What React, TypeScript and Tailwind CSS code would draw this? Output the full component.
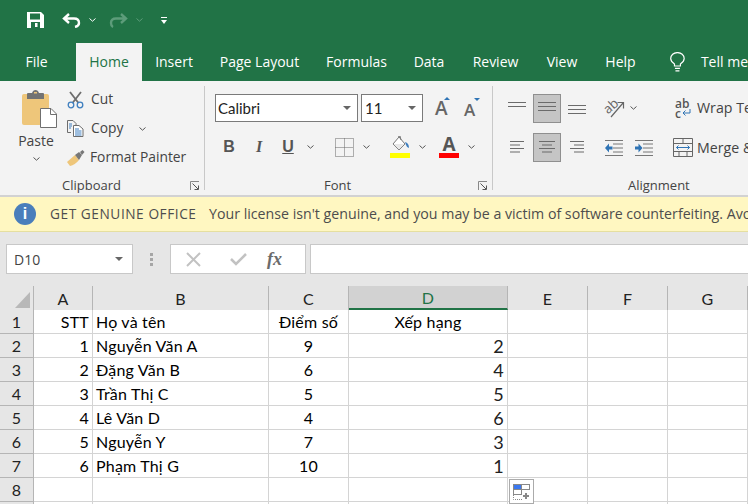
import React from 'react';

const tabs = [
  { label: 'File', cls: 'w-[73px]' },
  { label: 'Home', cls: 'w-[66px] ml-[3px] bg-[#f3f3f3] text-[#217346]' },
  { label: 'Insert', cls: 'w-[64px]' },
  { label: 'Page Layout', cls: 'w-[107px]' },
  { label: 'Formulas', cls: 'w-[87px]' },
  { label: 'Data', cls: 'w-[58px]' },
  { label: 'Review', cls: 'w-[75px]' },
  { label: 'View', cls: 'w-[58px]' },
  { label: 'Help', cls: 'w-[59px]' },
];

const rows = [
  ['1', 'STT', 'Họ và tên', 'Điểm số', 'Xếp hạng'],
  ['2', '1', 'Nguyễn Văn A', '9', '2'],
  ['3', '2', 'Đặng Văn B', '6', '4'],
  ['4', '3', 'Trần Thị C', '5', '5'],
  ['5', '4', 'Lê Văn D', '4', '6'],
  ['6', '5', 'Nguyễn Y', '7', '3'],
  ['7', '6', 'Phạm Thị G', '10', '1'],
  ['8', '', '', '', ''],
  ['9', '', '', '', ''],
];

function Chevron({ color = '#555', className = '' }: { color?: string; className?: string }) {
  return (
    <svg width="7" height="4" viewBox="0 0 7 4" className={'shrink-0 ' + className}>
      <path d="M0.5 0.5 L3.5 3.2 L6.5 0.5" fill="none" stroke={color} strokeWidth="1" />
    </svg>
  );
}

function Caret() {
  return <div className="w-0 h-0 border-x-[4px] border-x-transparent border-t-[4px] border-t-[#666]" />;
}

function Launcher() {
  return (
    <svg width="10" height="10" viewBox="0 0 10 10">
      <path d="M0.5 9 V0.5 H9" fill="none" stroke="#888" />
      <path d="M2.5 2.5 L8 8 M8.5 4.5 V8.5 H4.5" fill="none" stroke="#555" />
    </svg>
  );
}

function Lines({ w = 18, gap = 4, widths }: { w?: number; gap?: number; widths: [number, number][] }) {
  return (
    <svg width={w} height="13" viewBox={'0 0 ' + w + ' 13'} className="block">
      {widths.map(([x, len], i) => (
        <rect key={i} x={x} y={i * gap} width={len} height="1" fill="#6b6b6b" />
      ))}
    </svg>
  );
}

function Sep({ className = 'h-[27px]' }: { className?: string }) {
  return <div className={'w-px shrink-0 bg-[#c8c8c8] ' + className} />;
}

function PasteIcon() {
  return (
    <svg width="35" height="38" viewBox="0 0 35 38">
      <rect x="0" y="4" width="27" height="31" rx="2" fill="#eec67a" />
      <path d="M5 4 Q5 3 6 3 H10 Q11 0 13.5 0 Q16 0 17 3 H21 Q22 3 22 4 V9 H5 Z" fill="#737373" />
      <rect x="12" y="2" width="3" height="1.5" fill="#eec67a" />
      <path d="M18.5 18.5 H29 L34.5 24 V37.5 H18.5 Z" fill="#fff" stroke="#6f6f6f" />
      <path d="M28.5 18.5 V24.5 H34.5" fill="none" stroke="#6f6f6f" />
    </svg>
  );
}

function CutIcon() {
  return (
    <svg width="17" height="18" viewBox="0 0 17 18">
      <path d="M3 1 L11.5 12 M14 1 L5.5 12" stroke="#6d6d6d" strokeWidth="1.8" fill="none" />
      <circle cx="4" cy="14" r="2.8" fill="none" stroke="#3f7fbf" strokeWidth="1.3" />
      <circle cx="13" cy="14" r="2.8" fill="none" stroke="#3f7fbf" strokeWidth="1.3" />
    </svg>
  );
}

function CopyIcon() {
  return (
    <svg width="17" height="17" viewBox="0 0 17 17">
      <path d="M0.5 0.5 H6 L9 3.5 V5 M4 12.5 H0.5 V0.5" fill="none" stroke="#6d6d6d" />
      <path d="M6.5 5.5 H12 L16 9 V16.5 H6.5 Z" fill="#fff" stroke="#6d6d6d" />
      <path d="M8 9 H12 M8 11 H14.5 M8 13 H14.5 M8 15 H14.5" stroke="#3f7fbf" />
      <path d="M2 4 H5 M2 6 H5 M2 8 H4" stroke="#3f7fbf" />
    </svg>
  );
}

function BrushIcon() {
  return (
    <svg width="18" height="16" viewBox="0 0 18 16">
      <path d="M0 12 L8 5 L12 10 Q8 15 3 16 Z" fill="#eec67a" />
      <path d="M8 5 L12 2 L15 5 L12 10 Z" fill="#777" />
      <path d="M13 2 L15.5 0 L17.5 2 L15 5 Z" fill="#777" />
    </svg>
  );
}

function Bordered() {
  return (
    <svg width="19" height="19" viewBox="0 0 19 19" className="block">
      <path d="M0.5 0.5 H18.5 V18.5 H0.5 Z M9.5 0.5 V18.5 M0.5 9.5 H18.5" fill="none" stroke="#666" strokeDasharray="1 1" />
    </svg>
  );
}

function FillIcon() {
  return (
    <div className="flex flex-col items-center">
      <svg width="20" height="17" viewBox="0 0 20 17" className="block">
        <path d="M9 1 L3 8 L9 14 L15 8 Z" fill="#fff" stroke="#777" />
        <path d="M3.5 8 H14.5 L9 13.5 Z" fill="#e8e8e8" />
        <path d="M8 1 L10 0 L11 4" fill="none" stroke="#777" />
        <path d="M15 6 Q19 7 19 12 Q17 12 16 9 Z" fill="#3f7fbf" />
      </svg>
      <div className="w-[20px] h-[5px] bg-[#ffff00]" />
    </div>
  );
}

function OrientationIcon() {
  return (
    <svg width="21" height="20" viewBox="0 0 21 20" className="block">
      <g transform="rotate(-42 8 9)">
        <text x="0" y="12" fontSize="13" fill="#666" fontFamily="'Open Sans', sans-serif">ab</text>
      </g>
      <path d="M7 19 L19 5 M13.5 4.5 H19.5 V10.5" fill="none" stroke="#666" strokeWidth="1.2" />
    </svg>
  );
}

function IndentIcon({ flip }: { flip?: boolean }) {
  return (
    <svg width="18" height="16" viewBox="0 0 18 16" className="block">
      <path d="M0 0.5 H18 M8 4 H18 M8 8 H18 M8 12 H18 M0 15.5 H18" stroke="#777" fill="none" />
      {flip ? (
        <path d="M0 6.5 H3.5 V3.5 L7.5 8 L3.5 12.5 V9.5 H0 Z" fill="#2f74b5" />
      ) : (
        <path d="M7.5 6.5 H4 V3.5 L0 8 L4 12.5 V9.5 H7.5 Z" fill="#2f74b5" />
      )}
    </svg>
  );
}

function MergeIcon() {
  return (
    <svg width="20" height="19" viewBox="0 0 20 19" className="block">
      <path d="M0.5 0.5 H19.5 V18.5 H0.5 Z M0.5 5.5 H19.5 M0.5 13.5 H19.5 M10 0.5 V5.5 M6 13.5 V18.5 M14 13.5 V18.5" fill="none" stroke="#666" />
      <path d="M3.5 9.5 H16.5 M5.5 7.5 L3.5 9.5 L5.5 11.5 M14.5 7.5 L16.5 9.5 L14.5 11.5" fill="none" stroke="#2f74b5" />
    </svg>
  );
}

function Group({ label, width, labelCls, launcher, children }: { label: string; width: string; labelCls: string; launcher?: boolean; children: React.ReactNode }) {
  return (
    <section className={'flex flex-col shrink-0 h-full ' + width}>
      <div className="flex-1 min-h-0">{children}</div>
      <div className={'flex items-center justify-between h-[20px] mb-[-1px] text-[13px] text-[#444] ' + labelCls}>
        <span>{label}</span>
        {launcher && <Launcher />}
      </div>
    </section>
  );
}

export default function App() {
  return (
    <div className="w-[748px] h-[504px] overflow-hidden bg-[#e6e6e6] text-[#444] font-['Open_Sans',sans-serif]">
      {/* quick access */}
      <div className="h-[43px] bg-[#217346] flex items-center pl-[27px] pb-[3px]">
        <svg width="17" height="16" viewBox="0 0 17 16">
          <path d="M0 0 H14 L17 3 V16 H0 Z" fill="#fff" />
          <rect x="3" y="1.5" width="10" height="6" fill="#217346" />
          <rect x="4" y="10" width="9" height="6" fill="#217346" />
          <rect x="8" y="11" width="2.5" height="4" fill="#fff" />
        </svg>
        <svg width="19" height="15" viewBox="0 0 19 15" className="ml-[18px]">
          <path d="M7 1 L2 5.5 L7 10 M2 5.5 H12 Q17 5.5 17 10 Q17 13 13 14" fill="none" stroke="#fff" strokeWidth="2.4" />
        </svg>
        <Chevron color="#fff" className="ml-[8px]" />
        <svg width="19" height="15" viewBox="0 0 19 15" className="ml-[13px]">
          <path d="M12 1 L17 5.5 L12 10 M17 5.5 H7 Q2 5.5 2 10 Q2 13 4 14" fill="none" stroke="#5d9c7a" strokeWidth="2.4" />
        </svg>
        <Chevron color="#5d9c7a" className="ml-[8px]" />
        <svg width="6" height="7" viewBox="0 0 6 7" className="ml-[18px]">
          <rect y="0" width="6" height="1" fill="#fff" />
          <path d="M0 3 H6 L3 7 Z" fill="#fff" />
        </svg>
      </div>

      {/* tabs */}
      <div className="h-[38px] bg-[#217346] flex items-stretch text-[14px] text-white">
        {tabs.map((t) => (
          <div key={t.label} className={'flex items-center justify-center shrink-0 pb-px ' + t.cls}>
            {t.label}
          </div>
        ))}
        <svg width="15" height="20" viewBox="0 0 15 20" className="ml-[20px] self-center">
          <path d="M4.5 14 V12 Q0.7 9.5 0.7 6.5 A6.8 6 0 0 1 14.3 6.5 Q14.3 9.5 10.5 12 V14 Z" fill="none" stroke="#fff" strokeWidth="1.2" />
          <path d="M5 16.5 H10 M5.5 19 H9.5" stroke="#fff" strokeWidth="1.2" />
        </svg>
        <div className="flex items-center ml-[16px] pb-px whitespace-nowrap">Tell me</div>
      </div>

      {/* ribbon */}
      <div className="h-[114px] bg-[#f3f3f3] flex overflow-hidden">
        <Group label="Clipboard" width="w-[204px]" labelCls="pl-[62px] pr-[4px]" launcher>
          <div className="flex">
            <div className="w-[72px] pl-[22px] pt-[9px] flex flex-col items-start">
              <PasteIcon />
              <div className="w-[36px] -ml-[4px] text-center text-[14px] mt-[2px]">Paste</div>
              <Chevron className="ml-[11px] mt-[6px]" />
            </div>
            <div className="-ml-[5px] pt-[4px] text-[13.8px]">
              <div className="h-[29px] flex items-center gap-[7px]"><CutIcon /><span>Cut</span></div>
              <div className="h-[29px] flex items-center gap-[7px]"><CopyIcon /><span>Copy</span><Chevron className="ml-[9px]" /></div>
              <div className="h-[29px] flex items-center gap-[5px]"><BrushIcon /><span className="whitespace-nowrap">Format Painter</span></div>
            </div>
          </div>
        </Group>
        <Sep className="h-[104px] mt-[5px]" />
        <Group label="Font" width="w-[287px]" labelCls="pl-[119px] pr-[4px]" launcher>
          <div className="pl-[10px] pt-[13px]">
            <div className="flex items-center">
              <div className="w-[143px] h-[28px] bg-white border border-[#7a7a7a] flex items-center justify-between pl-[2px] pr-[6px] text-[15px]">
                <span className="font-['Lato',sans-serif] text-[#222]">Calibri</span><Caret />
              </div>
              <div className="w-[62px] h-[28px] ml-[3px] bg-white border border-[#7a7a7a] flex items-center justify-between pl-[3px] pr-[6px] text-[15px] text-[#222]">
                <span className="font-['Lato',sans-serif]">11</span><Caret />
              </div>
              <div className="ml-[12px] w-[15px] relative text-[19px] font-semibold text-[#666] leading-none">
                A<div className="absolute right-0 -top-[2px] w-0 h-0 border-x-[3px] border-x-transparent border-b-[3px] border-b-[#2f74b5]" />
              </div>
              <div className="ml-[14px] w-[16px] relative text-[17px] font-semibold text-[#666] leading-none mt-[2px]">
                A<div className="absolute right-0 -top-[3px] w-0 h-0 border-x-[3px] border-x-transparent border-t-[3px] border-t-[#2f74b5]" />
              </div>
            </div>
            <div className="flex items-center h-[28px] mt-[11px] text-[#555]">
              <div className="w-[12px] ml-[8px] text-center text-[16px] font-bold font-['Liberation_Sans',sans-serif]">B</div>
              <div className="w-[12px] ml-[18px] text-center text-[16px] font-bold italic font-['Liberation_Serif',serif]">I</div>
              <div className="w-[14px] ml-[16px] text-center text-[16px] font-bold underline font-['Liberation_Sans',sans-serif]">U</div>
              <Chevron className="ml-[12px]" />
              <Sep className="ml-[12px]" />
              <div className="ml-[8px]"><Bordered /></div>
              <Chevron className="ml-[9px]" />
              <Sep className="ml-[11px]" />
              <div className="ml-[8px]"><FillIcon /></div>
              <Chevron className="ml-[9px]" />
              <div className="ml-[13px] flex flex-col items-center">
                <span className="text-[19px] leading-[17px] font-bold text-[#555]">A</span>
                <div className="w-[20px] h-[5px] bg-[#ff0000]" />
              </div>
              <Chevron className="ml-[9px]" />
            </div>
          </div>
        </Group>
        <Sep className="h-[104px] mt-[5px]" />
        <div className="flex-1 min-w-0">
          <Group label="Alignment" width="w-full" labelCls="pl-[135px] justify-start">
            <div className="pl-[15px] pt-[13px] whitespace-nowrap">
              <div className="flex items-center w-max h-[28px]">
                <Lines widths={[[0, 18], [0, 18], [0, 0]]} />
                <div className="w-[28px] h-[29px] ml-[7px] bg-[#c5c5c5] border border-[#8f8f8f] flex items-center justify-center"><Lines widths={[[0, 18], [0, 18], [0, 18]]} /></div>
                <div className="ml-[7px] mt-[6px]"><Lines widths={[[0, 18], [0, 18], [0, 18]]} /></div>
                <Sep className="ml-[9px]" />
                <div className="ml-[8px]"><OrientationIcon /></div>
                <Chevron className="ml-[5px]" />
                <Sep className="ml-[26px]" />
                <div className="ml-[11px] w-[18px] flex flex-col text-[12px] leading-[9px] text-[#555] font-semibold">
                  <span>ab</span>
                  <div className="flex items-center mt-[1px]">
                    <span>c</span>
                    <svg width="9" height="8" viewBox="0 0 9 8" className="ml-[1px]"><path d="M8 0 V4 H1 M3.500 1.500 L1 4 L3.500 6.500" fill="none" stroke="#2f74b5" /></svg>
                  </div>
                </div>
                <span className="ml-[4px] text-[14.2px]">Wrap Text</span>
              </div>
              <div className="flex items-center w-max h-[29px] mt-[11px]">
                <div className="ml-[2px]"><Lines w={14} gap={3.5} widths={[[0, 14], [0, 10], [0, 14], [0, 10]]} /></div>
                <div className="w-[28px] h-[29px] ml-[9px] bg-[#c5c5c5] border border-[#8f8f8f] flex items-center justify-center"><Lines w={16} gap={3.5} widths={[[0, 16], [3, 10], [0, 16], [3, 10]]} /></div>
                <div className="ml-[9px]"><Lines w={14} gap={3.5} widths={[[0, 14], [4, 10], [0, 14], [4, 10]]} /></div>
                <Sep className="ml-[11px]" />
                <div className="ml-[9px]"><IndentIcon /></div>
                <div className="ml-[12px]"><IndentIcon flip /></div>
                <Sep className="ml-[10px]" />
                <div className="ml-[9px]"><MergeIcon /></div>
                <span className="ml-[4px] text-[14.2px]">Merge &amp; Center</span>
              </div>
            </div>
          </Group>
        </div>
      </div>

      {/* license banner */}
      <div className="h-[37px] border-t-2 border-[#d2d2d2]">
        <div className="h-[35px] bg-[#fff7c1] border-b border-[#e5dfa0] flex items-center pl-[14px] text-[14.2px] text-[#4d4d4d] whitespace-nowrap overflow-hidden">
          <div className="w-[22px] h-[22px] rounded-full bg-[#4a7ebb] text-white flex items-center justify-center font-bold text-[16px] font-['Liberation_Sans',sans-serif] shrink-0">i</div>
          <span className="ml-[14px] w-[159px] shrink-0 text-[13.7px] tracking-[0.55px]">GET GENUINE OFFICE</span>
          <span>Your license isn't genuine, and you may be a victim of software counterfeiting. Avoid</span>
        </div>
      </div>

      {/* formula bar */}
      <div className="h-[30px] mt-[12px] flex">
        <div className="w-[127px] ml-[6px] bg-white border border-[#c8c8c8] flex items-center justify-between pl-[7px] pr-[9px] text-[14px] text-[#444]">
          D10<Caret />
        </div>
        <div className="w-[37px] flex flex-col items-center justify-center gap-[2px]">
          <div className="w-[3px] h-[3px] bg-[#a6a6a6]" />
          <div className="w-[3px] h-[3px] bg-[#a6a6a6]" />
          <div className="w-[3px] h-[3px] bg-[#a6a6a6]" />
        </div>
        <div className="w-[136px] bg-white border border-[#c8c8c8] flex items-center text-[#bdbdbd]">
          <svg width="15" height="15" viewBox="0 0 15 15" className="ml-[15px]"><path d="M1 1 L14 14 M14 1 L1 14" stroke="#c2c2c2" strokeWidth="2" /></svg>
          <svg width="17" height="14" viewBox="0 0 17 14" className="ml-[29px]"><path d="M1 7 L6 12 L16 2" fill="none" stroke="#c2c2c2" strokeWidth="2.5" /></svg>
          <span className="ml-[20px] font-['Liberation_Serif',serif] italic font-bold text-[18px] text-[#6b6b6b]">fx</span>
        </div>
        <div className="flex-1 ml-[4px] bg-white border border-[#c8c8c8] border-r-0" />
      </div>

      {/* sheet */}
      <div className="relative mt-[12px] grid grid-cols-[34px_59px_176px_80px_159px_80px_80px_80px] grid-rows-[24px] auto-rows-[24px] bg-white font-['Lato',sans-serif] text-[16px] tracking-[0.2px] text-black">
        <div className="bg-[#e6e6e6] border-r border-[#b5b5b5] flex items-end justify-end pr-[3px] pb-[2px]">
          <div className="w-0 h-0 border-l-[15px] border-l-transparent border-b-[16px] border-b-[#b8b8b8]" />
        </div>
        {['A', 'B', 'C', 'D', 'E', 'F', 'G'].map((c) => (
          <div
            key={c}
            className={
              'flex items-center justify-center pt-px border-r border-[#b5b5b5] text-[16px] ' +
              (c === 'D' ? 'bg-[#d2d2d2] text-[#217346] border-b-2 border-b-[#217346]' : 'bg-[#e6e6e6] text-[#222]')
            }
          >
            {c}
          </div>
        ))}
        {rows.map((r) => (
          <React.Fragment key={r[0]}>
            <div className="bg-[#e6e6e6] border-r border-b border-[#b5b5b5] flex items-center justify-center pt-px text-[16px] text-[#222]">{r[0]}</div>
            <div className="border-r border-b border-[#d4d4d4] flex items-center justify-end pt-px pr-[3px]">{r[1]}</div>
            <div className="border-r border-b border-[#d4d4d4] flex items-center pt-px pl-[3px] whitespace-nowrap">{r[2]}</div>
            <div className="border-r border-b border-[#d4d4d4] flex items-center justify-center pt-px">{r[3]}</div>
            <div className={'border-r border-b border-[#d4d4d4] flex items-center pt-px ' + (r[0] === '1' ? 'justify-center' : 'justify-end pr-[3px] text-[18px] text-[#222]')}>{r[4]}</div>
            <div className="border-r border-b border-[#d4d4d4]" />
            <div className="border-r border-b border-[#d4d4d4]" />
            <div className="border-r border-b border-[#d4d4d4]" />
          </React.Fragment>
        ))}
        {/* autofill options button sits over the cells */}
        <div className="absolute left-[509px] top-[193px] w-[25px] h-[25px] bg-white border border-[#ababab] flex items-center justify-center">
          <svg width="18" height="16" viewBox="0 0 18 16">
            <rect x="0.5" y="0.5" width="8" height="5" fill="#3b78f0" stroke="#888" />
            <rect x="8.5" y="0.5" width="8" height="5" fill="#fff" stroke="#888" />
            <rect x="0.5" y="5.5" width="8" height="5" fill="#fff" stroke="#888" />
            <path d="M0.5 11 V15.5 H9" fill="none" stroke="#888" strokeDasharray="1 1" />
            <path d="M13 9 V15 M10 12 H16" stroke="#888" strokeWidth="2" />
          </svg>
        </div>
      </div>
    </div>
  );
}
